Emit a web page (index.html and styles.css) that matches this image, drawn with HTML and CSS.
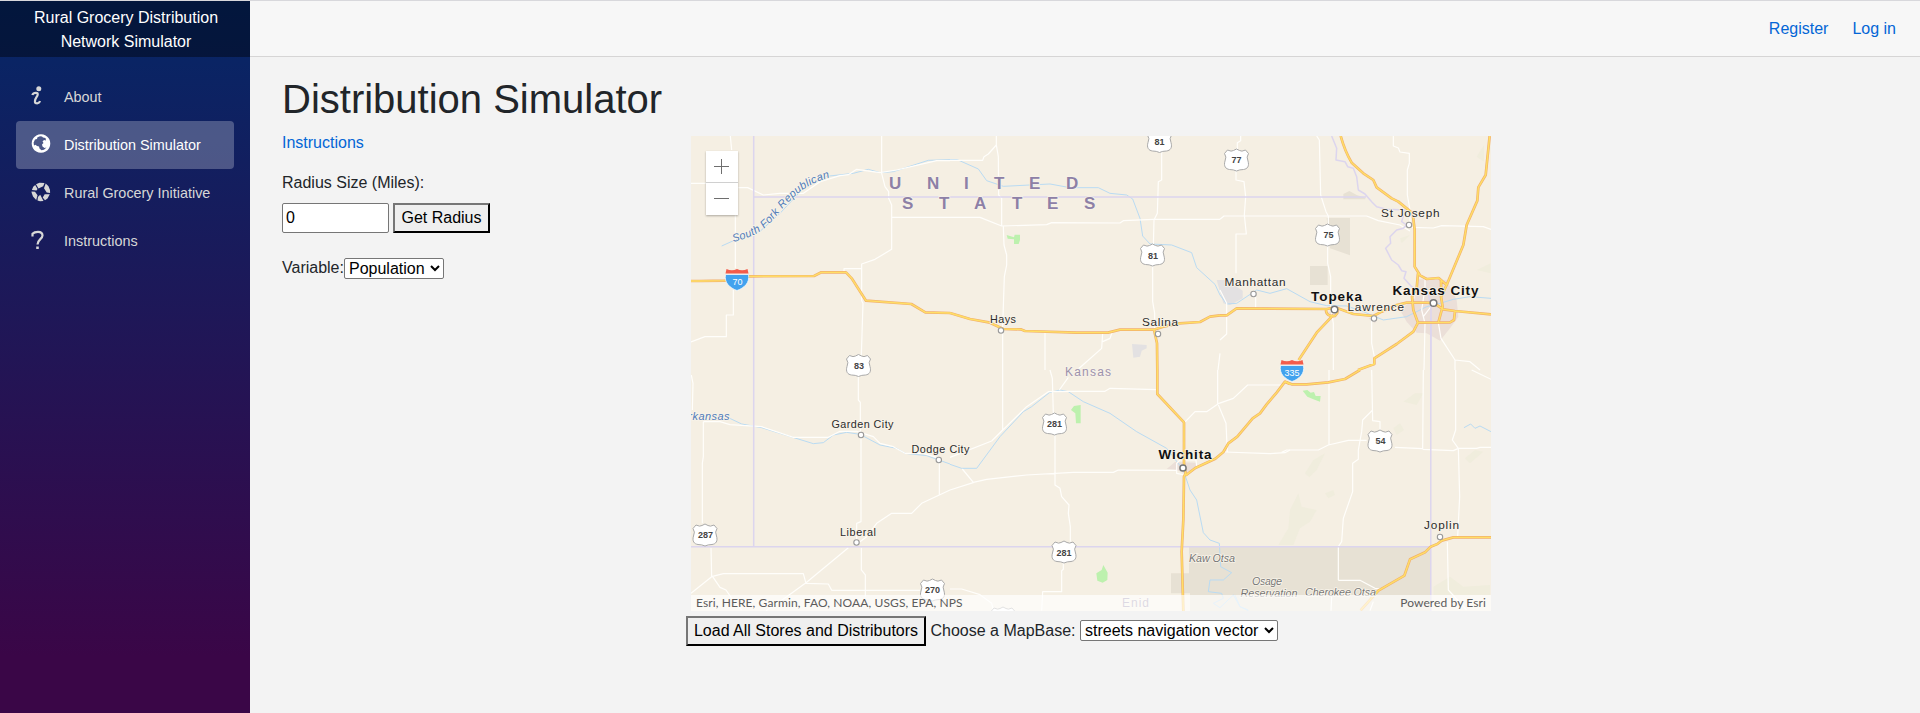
FILE: index.html
```html
<!DOCTYPE html>
<html lang="en">
<head>
<meta charset="utf-8">
<title>Distribution Simulator</title>
<link rel="stylesheet" href="styles.css">
</head>
<body>
<div class="page">
<aside class="sidebar">
<div class="brand">Rural Grocery Distribution<br>Network Simulator</div>
<nav class="nav">
<a class="nav-link"><svg class="ico" viewBox="0 0 20 20"><circle cx="7.800" cy="2.800" r="2.500"/><path class="line" d="M1.300 9C2 7 3.500 6.800 5 6.800C7.500 6.800 7 9 5.500 11.200C3.800 13.800 3.200 16.800 5.200 17.200C7 17.500 8.500 16.500 9 15"/></svg>About</a>
<a class="nav-link active"><svg class="ico" viewBox="0 0 20 20"><path fill-rule="evenodd" d="M10 .2A9.300 9.300 0 1 1 9.990 .2ZM9 2.200L6.500 3.200L6 5L4 5.500L2.600 8.500L3 11.500L4.500 10.800L6 12L8 12.500L8.500 14.500L10.500 16.200L13 15.700L15.500 13.500L13.500 14L11.500 12.500L11 10.500L12.500 9L11.500 7.500L13 6L15 6.500L14.500 4L12 3.500L11 2.500Z"/></svg>Distribution Simulator</a>
<a class="nav-link"><svg class="ico" viewBox="0 0 20 20"><path d="M5 2.200L8.500 .8L13.500 .9L12.200 4.200L7.500 6.500ZM14.700 1.500L17.500 4.200L19 8L19.100 11L15.700 10.500L13 6.300ZM18.800 12.300L16.500 16.500L14 18.300L11.700 15.500L13.700 12.300ZM12.500 19L9 19.200L6.500 18.600L6.900 15L9.200 12.800ZM5.200 18L2 14.500L.7 11L.5 9.500L4 9.700L6.500 13.300ZM.9 8L2.200 4.700L4.200 3L6.500 7L5.500 8.500Z"/></svg>Rural Grocery Initiative</a>
<a class="nav-link"><svg class="ico" viewBox="0 0 20 20"><path class="line" d="M1.500 6.500V3.800C3 2.100 5 1.800 7 1.800C9.800 1.800 11.500 3.200 11.500 5.500C11.500 9 6.500 9.500 6.500 14.500"/><path d="M5.200 16.500H7.800V19H5.200Z"/></svg>Instructions</a>
</nav>
</aside>
<main class="main">
<header class="topbar"><a>Register</a><a>Log in</a></header>
<section class="content">
<h1>Distribution Simulator</h1>
<div class="columns">
<div class="controls">
<a class="help">Instructions</a>
<label class="radius-label">Radius Size (Miles):</label>
<div class="radius-row"><input class="radius" type="text" value="0"><button class="get">Get Radius</button></div>
<div class="variable-row">Variable:<select class="variable"><option>Population</option></select></div>
</div>
<div class="map-column">
<div class="map">
<svg class="map-art" viewBox="691 136 800 475">
<defs>
<path id="us" d="M-9 -10Q-5 -8 -3 -9.500L0 -11L3 -9.500Q5 -8 9 -10L12 -6.500Q9.500 -3 11.500 1C13 6 11 9 7 9.500Q3 9.500 0 11Q-3 9.500 -7 9.500C-11 9 -13 6 -11.500 1Q-9.500 -3 -12 -6.500Z"/>
<g id="interstate"><path class="blue" d="M-11.500 -4.500H11.500C13 4 7 9 0 11.500C-7 9 -13 4 -11.500 -4.500Z"/><path class="red" d="M-10.500 -10Q-5 -7.500 0 -10Q5 -7.500 10.500 -10L11.500 -5.500H-11.500Z"/></g>
<g id="freeways">
<g transform="translate(680 130) scale(.33333)"><path d="M33 453H60L135 452L210 439L402 438L424 427H498L515 445L558 512L694 522L736 547L810 549"/></g>
<g transform="translate(950 130) scale(.33333)"><path d="M0 549L60 567L120 578L160 597L212 598L225 603L380 608L474 608L510 599H612L640 590L688 580L750 576L780 560L810 556M612 599L621 640L622 720"/></g>
<g transform="translate(1220 130) scale(.33333)"><path d="M0 556H20L50 535L320 537L345 532L400 552L460 558L485 545L530 525L560 518H620L641 519L670 538L705 543L813 553M318 540Q318 560 345 558Q360 545 345 532M340 555L290 608L236 690M362 18Q375 65 395 98L430 130L460 150L470 172L515 205L535 215L578 250L584 300L584 410L600 436L620 447L656 444L680 465M809 18L797 135L775 172L772 212L740 285L730 345L680 465L663 500L668 530L655 578M594 430L590 475L576 500L580 540L594 578L580 605L530 642L463 685V702L414 720M594 578L690 577L702 570L705 543M663 448L664 500"/></g>
<g transform="translate(950 370) scale(.33333)"><path d="M622 0V72L702 157V280L707 310L702 320L700 450L695 545L700 723M707 316L736 294L796 266L820 246L835 220L862 200L908 145L930 130L950 103L980 68L1005 35L1020 42"/></g>
<g transform="translate(1220 370) scale(.33333)"><path d="M195 35L215 43H260L325 37L375 27L420 0M422 721L475 662L553 617L570 568L615 547L632 530L652 522L665 512L700 502H813"/></g>
</g>
</defs>
<rect class="terrain" x="691" y="136" width="800" height="475"/>
<g class="areas" transform="translate(950 130) scale(.33333)"><path class="park" d="M170 315L192 322L194 314H210V330L206 342H192V328L173 326Z"/><path class="urban" d="M546 642L590 645V655L575 662L570 680L550 683Z"/><path class="urban" d="M800 450H830L878 482V505L840 525L820 520Z"/></g>
<g class="areas" transform="translate(1220 130) scale(.33333)"><path class="reserve" d="M320 264H390V376L330 355ZM270 408H323V465H270ZM370 192L388 183L410 195L436 203V208H370Z"/><path class="metro" d="M590 448L680 450L710 510L715 560L690 595L660 632L620 610L590 608L560 575L540 540L585 505ZM445 565L475 560L465 580ZM325 545L360 548L335 565Z"/><path class="green" d="M770 80L792 45V95ZM540 325L570 315L545 340ZM770 420L812 400V430Z"/></g>
<g class="areas" transform="translate(950 370) scale(.33333)"><path class="park" d="M363 120L372 108L392 105V160H378L376 130ZM439 610L455 600L460 585L473 608L472 630L458 638L442 632Z"/><path class="reserve" d="M717 531H810V723H720V670H663V610H717Z"/><path class="metro" d="M650 297L675 276L740 278L738 298L710 312L680 300Z"/></g>
<g class="areas" transform="translate(1220 370) scale(.33333)"><path class="reserve" d="M0 531H632V723H0Z"/><path class="park" d="M248 62L262 60L272 68L282 66L287 78L302 78L300 95L280 88L262 80Z"/><path class="green" d="M550 95L585 70L610 70L590 105ZM520 175L540 160L552 180L530 195ZM255 310L280 270L315 250L290 300L268 322ZM210 420L235 370L245 410L290 420L270 455L240 475L220 525H175L205 475ZM735 265L765 240L790 245L750 280ZM640 650L690 620L730 650L810 645V675H640ZM315 370L340 360L345 375L325 385Z"/></g>
<g class="water">
<g transform="translate(680 130) scale(.33333)"><path d="M125 348L165 330L240 304L300 250L370 175L440 139L520 130L565 118L600 128L640 125L745 91L810 89"/></g>
<g transform="translate(950 130) scale(.33333)"><path d="M0 89H22L85 117L110 152L160 169L300 162L360 173H445L480 190L530 195L548 207L570 265L578 318L600 342L665 345L725 368L740 413L795 463L810 495"/></g>
<g transform="translate(1220 130) scale(.33333)"><path d="M0 495L20 522L50 520L110 480L150 490L200 476L270 515L320 527L380 528L430 545L490 570L560 560L620 530L660 520L700 508L750 500L813 505"/></g>
<g transform="translate(680 370) scale(.33333)"><path d="M145 143L185 162L245 173L400 221L430 218L460 195L500 187L540 193L600 225L650 235L675 250L740 257L810 282"/></g>
<g transform="translate(950 370) scale(.33333)"><path d="M0 283L35 295H80L150 200L220 125L245 110L298 68L330 60L355 65L400 95L480 130L560 185L650 235L700 300L720 360L740 390L760 488L780 510L808 520L812 590L845 608L820 630H780L775 665L815 670L820 685L790 700L810 713L850 675L870 710L895 720"/></g>
<g transform="translate(1220 370) scale(.33333)"><path d="M732 173L752 162L765 175L780 168L813 185M45 675L60 710L85 722"/></g>
</g>
<g class="roads">
<g transform="translate(680 130) scale(.33333)"><path d="M151 18L155 60M33 160H80M175 173H203L250 195L300 190H370L420 155L480 137L505 134L530 118L600 128L650 120L770 92H810M605 18V130L615 170L626 185V205L635 225V358L585 388L545 402V512L549 520L544 675M492 427V416H545M635 262H810M166 255V415M160 480V555H139V620H75L33 636"/></g>
<g transform="translate(950 130) scale(.33333)"><path d="M0 91H98L102 80L115 72L139 45V18M139 45L145 80L146 195L155 205V288M0 262H90L155 288L290 284L305 278L510 279L520 272L610 268H810M160 288L162 345L170 375V405L163 440L158 590V720M635 60V150L625 155L622 250L612 270L610 350M608 405V515L614 550V600M285 605V720M458 610L455 655L385 717M486 608L480 625L458 635M810 670L804 720"/></g>
<g transform="translate(1220 130) scale(.33333)"><path d="M62 18V32L52 38V60M48 120V150L72 155L77 200L73 255L79 312H48V430M0 268L12 258H440L475 272L540 285L570 303M290 18L298 30L302 195L318 245L325 258V285M323 345V400L332 440V530L340 580V720M520 18V48L535 54L540 66L568 70V100L562 120V195L570 240V285M575 292L640 294L665 287L790 290L813 298M107 500V535M0 480L20 520V612L0 630M455 570V640L463 680M615 440V475L605 540L615 580L612 720M641 519L610 560M655 578L663 625L705 690V720M705 690L750 695L780 720"/></g>
<g transform="translate(680 370) scale(.33333)"><path d="M34 15L39 40L37 120M70 155V260L67 280V460M70 155H120L150 164L245 170L340 202H445L480 184H530L580 200L600 220L640 230L675 250L730 250L770 262M535 15V90L541 97V185M543 200V455L530 460V510M778 275V375L725 400L695 430H635L590 460L560 500L540 515M778 375L810 360M505 533L380 637L320 680L258 722M544 533V600L556 615V680M93 533L95 620L33 670M95 620L130 611H370L378 640L445 642L455 661H720M98 620L120 652L138 660L155 685L185 720"/></g>
<g transform="translate(950 370) scale(.33333)"><path d="M158 0V180L125 213L0 262M125 213L230 110L295 65L380 64H465L480 55L620 59M300 0L307 25L310 130M355 22L328 60M315 192V345L330 355L335 380L357 405L355 430L361 470V515M340 578V598L335 602V665H278L275 722M37 297L70 337L110 328L230 315L370 307H490L505 300L680 301M0 360L72 337M0 657H35L90 674L125 700L130 720M704 157L735 125H770L807 100L850 85L893 45H1000M803 0V100L828 160L832 245M825 246L960 251L1005 248L1020 240M680 280V310L705 315L740 290L738 270H690Z"/></g>
<g transform="translate(1220 370) scale(.33333)"><path d="M185 247L200 240H295L325 225L385 211H440M327 0V225M455 0L458 152L480 155V182M458 120L428 150L425 185L415 240V268L398 280V365L370 445L365 515L355 530V631M355 631H420L465 655L480 657M335 680L333 722M460 695L450 722M525 232L608 236L610 0M608 238L700 242L715 235H770L780 232H813M707 0V180L697 210L715 235L719 380L713 500M682 515L685 660L740 720M755 0L813 28"/></g>
</g>
<g class="borders">
<path d="M753.700 136V547M753.700 197H1366M691 546.700H1430.500M1430.800 318V611"/>
<g transform="translate(1220 130) scale(.33333)"><path d="M335 18L350 55L348 90L375 95L383 110L400 115L410 140L415 180L435 192L455 215L470 230L500 238L555 240L545 275L560 285L550 295L530 300L510 320L512 340L497 355L515 390L535 405L545 422L558 425L552 445L575 470L600 490H625L633 530V720"/></g>
</g>
<use href="#freeways" class="casing"/><use href="#freeways" class="core"/>
<g class="shields"><use href="#us" x="858.500" y="365.500"/><use href="#us" x="1159.500" y="141.500"/><use href="#us" x="1152.500" y="255"/><use href="#us" x="1236.500" y="160"/><use href="#us" x="1327.500" y="235"/><use href="#us" x="705" y="535"/><use href="#us" x="932.500" y="590"/><use href="#us" x="1054.500" y="424"/><use href="#us" x="1064" y="552"/><use href="#us" x="1380" y="441"/><use href="#us" x="1003" y="618"/></g>
<use href="#interstate" x="737" y="279"/><use href="#interstate" x="1292" y="370"/>
<g class="numbers"><text x="859" y="369">83</text><text x="1159.500" y="144.500">81</text><text x="1153" y="258.500">81</text><text x="1236.500" y="163">77</text><text x="1328.500" y="238">75</text><text x="705.500" y="538">287</text><text x="932.500" y="592.500">270</text><text x="1054.500" y="427">281</text><text x="1064" y="555.500">281</text><text x="1380.500" y="444">54</text><text class="inv" x="737.500" y="284.500">70</text><text class="inv" x="1292" y="376">335</text></g>
<g class="dots"><circle cx="1001" cy="330.500" r="2.700"/><circle cx="1158" cy="334" r="2.700"/><circle cx="1253.500" cy="294" r="2.700"/><circle cx="1374" cy="318.500" r="2.700"/><circle cx="1409" cy="225" r="2.700"/><circle cx="861" cy="435" r="2.700"/><circle cx="938.800" cy="460" r="2.700"/><circle cx="856.500" cy="542.500" r="2.700"/><circle cx="1440" cy="537" r="2.700"/><circle class="major" cx="1334.500" cy="309.500" r="3.300"/><circle class="major" cx="1433.500" cy="303" r="3.300"/><circle class="major" cx="1183" cy="468" r="3.100"/></g>
<g class="labels">
<text x="990" y="323" textLength="26">Hays</text><text x="1142" y="326" textLength="36" class="mid">Salina</text><text x="1224.500" y="286" textLength="61" class="mid">Manhattan</text><text x="1347.500" y="310.500" textLength="56.500" class="mid">Lawrence</text><text x="1381" y="217" textLength="58.500" class="mid">St Joseph</text><text x="831.500" y="428" textLength="62">Garden City</text><text x="911.500" y="453" textLength="58">Dodge City</text><text x="840" y="535.500" textLength="36">Liberal</text><text x="1424" y="529" textLength="35" class="mid">Joplin</text>
<text class="big" x="1311" y="301" textLength="51">Topeka</text><text class="big" x="1392.500" y="295" textLength="86">Kansas City</text><text class="big" x="1158.500" y="459" textLength="53">Wichita</text>
<text class="state" x="1065" y="376" textLength="46">Kansas</text><text class="country" x="889 927 964 994 1029 1066" y="189">UNITED</text><text class="country" x="902 939 974 1012 1047 1084" y="209">STATES</text>
<text class="tribe" x="1189" y="561.500" textLength="46">Kaw Otsa</text><text class="tribe" x="1252" y="585" textLength="30">Osage</text><text class="tribe" x="1240.500" y="596.500" textLength="57">Reservation</text><text class="tribe" x="1305" y="596" textLength="71">Cherokee Otsa</text>
<path id="river" class="guide" d="M733 242C768 234 771 220 786 205C800 190 811 182 838 175"/>
<text class="river"><textPath href="#river" textLength="119">South Fork Republican</textPath></text><text class="river" x="688.500" y="420" textLength="41">rkansas</text>
<text class="state" x="1122" y="606.500" textLength="27">Enid</text>
</g>
</svg>
<div class="zoom"><span class="plus"></span><span class="minus"></span></div>
<div class="attribution"><span>Esri, HERE, Garmin, FAO, NOAA, USGS, EPA, NPS</span><span>Powered by Esri</span></div>
</div>
<div class="map-tools"><button>Load All Stores and Distributors</button><span>Choose a MapBase:</span><select class="basemap"><option>streets navigation vector</option></select></div>
</div>
</div>
</section>
</main>
</div>
</body>
</html>
```
FILE: styles.css
```css
* { box-sizing: border-box; }
body { margin: 0; background: #f3f3f3; color: #212529; font: 16px/24px "Liberation Sans", Arial, sans-serif; overflow: hidden; }
.page { display: flex; height: 713px; border-top: 1px solid #d8d8dc; }
.sidebar { width: 250px; flex: none; background: linear-gradient(180deg, #052767 0%, #3a0647 92%); }
.brand { height: 56px; padding: 5px 0 0 2px; background: rgba(0, 0, 0, .4); color: #fff; text-align: center; }
.nav { padding: 16px; }
.nav-link { display: flex; align-items: center; height: 48px; padding-left: 15px; border-radius: 4px; color: #d7d7d7; font-size: 14.4px; }
.nav-link.active { background: rgba(255, 255, 255, .25); color: #fff; }
.ico { width: 20px; height: 20px; margin: -3px 13px 0 0; fill: currentColor; }
.ico .line { fill: none; stroke: currentColor; stroke-width: 2.200; }
.main { flex: 1; }
.topbar { display: flex; justify-content: flex-end; gap: 24px; height: 56px; padding: 16px 24px 0 0; background: #f7f7f7; border-bottom: 1px solid #d6d5d5; }
.topbar a, .help { color: #0366d6; }
.content { padding: 18px 32px 0; }
h1 { margin: 0 0 8px; font-size: 40px; line-height: 48px; font-weight: 400; }
.columns { display: flex; }
.controls { width: 404px; }
.help { display: block; }
.radius-label { display: block; margin-top: 16px; }
.radius-row { display: flex; gap: 4px; margin-top: 8px; }
.radius { width: 107px; height: 30px; padding: 1px 3px; border: 1px solid #767676; border-radius: 2px; font: inherit; }
button { height: 30px; padding: 1px 5.500px; border: 2px outset #212529; border-color: #767676 #212529 #212529 #767676; background: #efefef; color: #000; font: inherit; line-height: 24px; white-space: nowrap; }
.get { width: 97px; }
.variable-row { display: flex; align-items: center; margin-top: 23px; }
select { height: 21px; border: 1px solid #767676; border-radius: 2px; background: #fff; color: #000; font: inherit; line-height: 19px; padding: 0; }
.variable { width: 100px; }
.basemap { width: 198px; }
.map-column { padding-top: 5px; }
.map { position: relative; width: 800px; height: 475px; margin-left: 5px; overflow: hidden; }
.map-art { display: block; width: 800px; height: 475px; }
.map-tools { display: flex; align-items: center; gap: 4.500px; margin-top: 5px; }
.map-tools button { width: 240px; }
.map-tools select { margin-top: -1px; }
.zoom { position: absolute; left: 15px; top: 15px; width: 32px; height: 64px; background: #fff; box-shadow: 0 1px 2px rgba(0, 0, 0, .3); }
.plus, .minus { display: flex; align-items: center; justify-content: center; height: 32px; position: relative; padding-right: 2px; }
.plus { border-bottom: 1px solid #d0d0d0; }
.minus { padding-bottom: 2px; }
.plus::before, .minus::before { content: ""; width: 15px; height: 1px; background: #6e6e6e; }
.plus::after { content: ""; position: absolute; width: 1px; height: 15px; background: #6e6e6e; }
.attribution { position: absolute; left: 0; right: 0; bottom: 0; height: 16px; padding: 0 5px; display: flex; justify-content: space-between; background: rgba(255, 255, 255, .66); color: #5c5c5c; font: 12px/16px Lato, sans-serif; letter-spacing: .1px; }
.terrain { fill: #f5efe3; }
.park { fill: #bdf1ae; }
.urban { fill: #e3e1e2; }
.metro { fill: #ebdfd8; }
.reserve { fill: #e7e1d4; }
.green { fill: #f0eddd; }
.water path, .roads path, .borders path, #freeways path { fill: none; vector-effect: non-scaling-stroke; stroke-linejoin: round; }
.water { stroke: #b9dbf3; stroke-width: 1; }
.roads { stroke: #fffefb; stroke-width: 1.200; }
.borders { stroke: #dcd5ee; stroke-width: 1.500; }
.casing { stroke: #f2b06c; stroke-width: 2.700; }
.core { stroke: #ffdf66; stroke-width: 1.400; }
.shields { fill: #fff; stroke: #aaa; stroke-width: 1; }
.blue { fill: #42a2ee; stroke: #fff; stroke-width: .7; }
.red { fill: #f45c4b; }
.numbers { font: bold 9px "Liberation Sans", sans-serif; fill: #444; text-anchor: middle; }
.inv { fill: #fff; font-weight: 400; }
.dots { fill: #fff; stroke: #999; stroke-width: 1.100; }
.major { stroke: #777; stroke-width: 1.500; }
.labels { font: 10.800px "Liberation Sans", sans-serif; fill: #2b2b2b; stroke: #f8f3e9; stroke-width: 1.600; paint-order: stroke; }
.mid { font-size: 11.800px; }
.big { font-size: 13.500px; font-weight: 700; fill: #111; }
.state { font-size: 12px; fill: #9d91ac; }
.country { font-size: 17px; font-weight: 700; fill: #8d80a6; }
.tribe { font-size: 10.800px; font-style: italic; fill: #777; }
.river { font-size: 11px; font-style: italic; fill: #4f7bb9; }
.guide { fill: none; stroke: none; }
```
